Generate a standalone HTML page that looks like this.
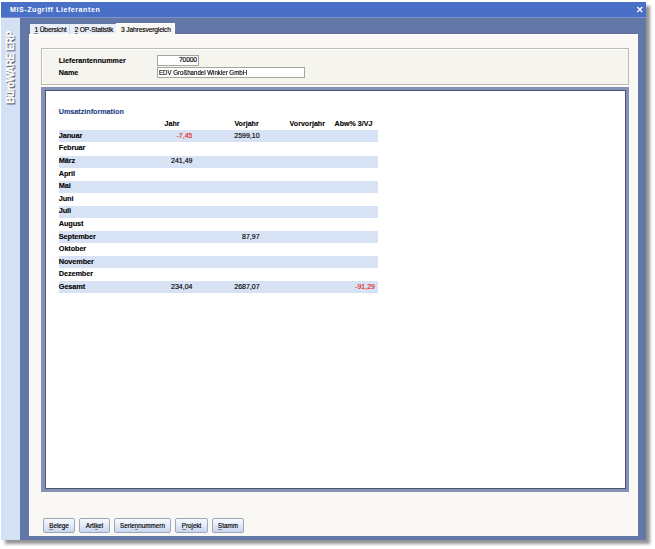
<!DOCTYPE html>
<html><head><meta charset="utf-8">
<style>
html,body{margin:0;padding:0;}
body{width:655px;height:549px;background:#fff;position:relative;overflow:hidden;font-family:"Liberation Sans",sans-serif;color:#000;}
.a{position:absolute;}
.t{position:absolute;white-space:nowrap;line-height:1;}
.b{font-weight:bold;-webkit-text-stroke:0.1px currentColor;}
u{text-decoration:none;border-bottom:0.6px solid #8a8a8a;}
.n{-webkit-text-stroke:0.15px currentColor;}
#shadow{left:5px;top:5.5px;width:645px;height:538px;background:rgba(0,0,0,0.42);filter:blur(1.8px);}
#win{left:1px;top:2px;width:645px;height:538px;background:#6277a6;}
#title{left:1px;top:2px;width:645px;height:15px;background:#4a6fc6;}
#tline{left:1px;top:17px;width:645px;height:1px;background:#7d94cf;}
#side{left:1px;top:18px;width:19px;height:522px;background:#d4e0f4;}
#content{left:29px;top:34px;width:609px;height:502px;background:#f9f8f4;border-left:1px solid #fff;border-top:1px solid #fff;box-sizing:border-box;}
.tab{position:absolute;top:24px;height:10px;background:#e9eff9;}
#grp{left:41px;top:48px;width:588px;height:37px;background:#f5f4ef;border:1px solid #bcbbb2;box-sizing:border-box;box-shadow:inset 1px 1px 0 #fff, 0 1px 0 #fff;}
.inp{position:absolute;background:#fff;border:1px solid #a6a6a1;box-sizing:border-box;}
#panel{left:41px;top:87px;width:588px;height:405px;background:#8592b8;}
#pin{left:45px;top:90px;width:581px;height:399px;background:#4b5470;}
#pwhite{left:46px;top:91px;width:579px;height:397px;background:#fff;}
.band{position:absolute;left:59px;width:319px;height:12px;background:#d7e2f4;}
.btn{position:absolute;top:518px;height:15px;border:1px solid #9ea7b6;border-radius:2px;box-sizing:border-box;background:linear-gradient(#f6f9fe,#e4ecf9 45%,#c7d5f0);}
.bt{font-size:6.3px;position:absolute;left:0;right:0;top:3.9px;text-align:center;line-height:1;white-space:nowrap;-webkit-text-stroke:0.15px #000;}
.r{color:#e52323;}
</style></head><body>
<div class="a" id="shadow"></div>
<div class="a" id="win"></div>
<div class="a" id="title"></div>
<div class="a" id="tline"></div>
<div class="a" id="side"></div>
<div class="a" style="left:29px;top:33px;width:609px;height:1px;background:#5c6e9c;"></div>
<div class="a" id="content"></div>
<div class="t b" style="left:10px;top:7px;font-size:7.1px;letter-spacing:0.55px;color:#fff;-webkit-text-stroke:0;">MIS-Zugriff Lieferanten</div>
<svg class="a" style="left:0;top:0" width="655" height="20"><path d="M637.3 6.9L642.3 11.9M642.3 6.9L637.3 11.9" stroke="#fff" stroke-width="1.35" fill="none"/></svg>
<svg class="a" style="left:0;top:0" width="20" height="120"><g font-family="Liberation Sans" font-weight="bold" font-size="10.2" letter-spacing="-0.45"><text x="0" y="0" transform="translate(15.4 104.9) rotate(-90)" fill="#60646b" stroke="#60646b" stroke-width="0.3">BüroWARE ERP</text><text x="0" y="0" transform="translate(14.2 103.8) rotate(-90)" fill="#fff" stroke="#fff" stroke-width="0.35">BüroWARE ERP</text></g></svg>
<div class="tab" style="left:30px;width:39px;"></div>
<div class="a" style="left:69px;top:24px;width:1px;height:10px;background:#c9d5ea;"></div>
<div class="tab" style="left:70px;width:46px;"></div>
<div class="a" style="left:116px;top:23px;width:59px;height:11px;background:#fff;"></div>
<div class="a" style="left:117px;top:24px;width:57px;height:11px;background:#f9f8f4;"></div>
<div class="t n" style="left:34.4px;top:26.9px;font-size:6.7px;letter-spacing:-0.15px;"><u>1</u> Übersicht</div>
<div class="t n" style="left:74.5px;top:26.9px;font-size:6.7px;letter-spacing:-0.15px;"><u>2</u> OP-Statistik</div>
<div class="t n" style="left:121px;top:26.5px;font-size:6.7px;letter-spacing:-0.15px;">3 Jahresvergleich</div>
<div class="a" id="grp"></div>
<div class="t b" style="left:58.7px;top:57px;font-size:7.2px;">Lieferantennummer</div>
<div class="t b" style="left:58.7px;top:69.2px;font-size:7.2px;">Name</div>
<div class="inp" style="left:157px;top:55px;width:42px;height:11px;"></div>
<div class="inp" style="left:157px;top:67px;width:148px;height:11px;"></div>
<div class="t n" style="right:458px;top:56.9px;font-size:6.7px;letter-spacing:-0.1px;">70000</div>
<div class="t n" style="left:159px;top:69.7px;font-size:6.8px;transform-origin:0 0;transform:scaleX(0.9);">EDV Großhandel Winkler GmbH</div>
<div class="a" id="panel"></div>
<div class="a" id="pin"></div>
<div class="a" id="pwhite"></div>
<div class="t b" style="left:58.7px;top:108.2px;font-size:7.2px;color:#213c84;">Umsatzinformation</div>
<div class="t b" style="left:164.6px;top:120.5px;font-size:7.1px;">Jahr</div>
<div class="t b" style="left:234.4px;top:120.5px;font-size:7.1px;">Vorjahr</div>
<div class="t b" style="left:289.6px;top:120.5px;font-size:7.1px;">Vorvorjahr</div>
<div class="t b" style="left:334.6px;top:120.5px;font-size:7.1px;">Abw% 3/VJ</div>
<div class="band" style="top:130.40px;"></div>
<div class="band" style="top:155.58px;"></div>
<div class="band" style="top:180.76px;"></div>
<div class="band" style="top:205.94px;"></div>
<div class="band" style="top:231.12px;"></div>
<div class="band" style="top:256.30px;"></div>
<div class="band" style="top:281.48px;"></div>
<div class="t b" style="left:58.8px;top:131.80px;font-size:7.4px;letter-spacing:-0.15px;">Januar</div>
<div class="t n r" style="right:462.5px;top:132.30px;font-size:7px;">-7,45</div>
<div class="t n" style="right:395.4px;top:132.30px;font-size:7px;">2599,10</div>
<div class="t b" style="left:58.8px;top:144.39px;font-size:7.4px;letter-spacing:-0.15px;">Februar</div>
<div class="t b" style="left:58.8px;top:156.98px;font-size:7.4px;letter-spacing:-0.15px;">März</div>
<div class="t n" style="right:462.5px;top:157.48px;font-size:7px;">241,49</div>
<div class="t b" style="left:58.8px;top:169.57px;font-size:7.4px;letter-spacing:-0.15px;">April</div>
<div class="t b" style="left:58.8px;top:182.16px;font-size:7.4px;letter-spacing:-0.15px;">Mai</div>
<div class="t b" style="left:58.8px;top:194.75px;font-size:7.4px;letter-spacing:-0.15px;">Juni</div>
<div class="t b" style="left:58.8px;top:207.34px;font-size:7.4px;letter-spacing:-0.15px;">Juli</div>
<div class="t b" style="left:58.8px;top:219.93px;font-size:7.4px;letter-spacing:-0.15px;">August</div>
<div class="t b" style="left:58.8px;top:232.52px;font-size:7.4px;letter-spacing:-0.15px;">September</div>
<div class="t n" style="right:395.4px;top:233.02px;font-size:7px;">87,97</div>
<div class="t b" style="left:58.8px;top:245.11px;font-size:7.4px;letter-spacing:-0.15px;">Oktober</div>
<div class="t b" style="left:58.8px;top:257.70px;font-size:7.4px;letter-spacing:-0.15px;">November</div>
<div class="t b" style="left:58.8px;top:270.29px;font-size:7.4px;letter-spacing:-0.15px;">Dezember</div>
<div class="t b" style="left:58.8px;top:282.88px;font-size:7.4px;letter-spacing:-0.15px;">Gesamt</div>
<div class="t n" style="right:462.5px;top:283.38px;font-size:7px;">234,04</div>
<div class="t n" style="right:395.4px;top:283.38px;font-size:7px;">2687,07</div>
<div class="t n r" style="right:280.0px;top:283.38px;font-size:7px;">-91,29</div>
<div class="btn" style="left:43px;width:32px;"><span class="bt"><u>B</u>elege</span></div>
<div class="btn" style="left:79px;width:31px;"><span class="bt">Arti<u>k</u>el</span></div>
<div class="btn" style="left:114px;width:57px;"><span class="bt">Serie<u>n</u>nummern</span></div>
<div class="btn" style="left:175px;width:33px;"><span class="bt"><u>P</u>rojekt</span></div>
<div class="btn" style="left:212px;width:32px;"><span class="bt"><u>S</u>tamm</span></div>
</body></html>
